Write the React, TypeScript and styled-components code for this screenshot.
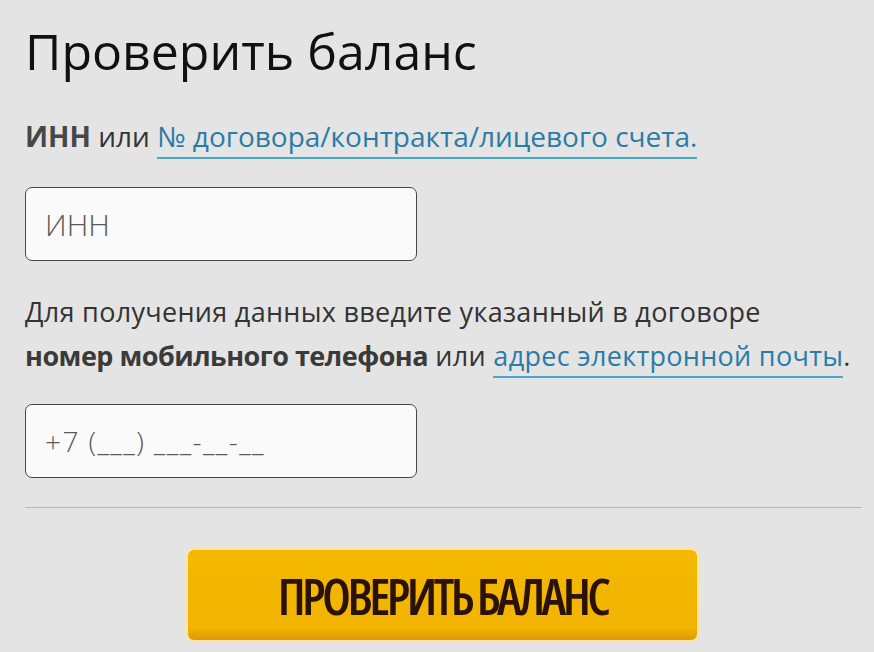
import styled, { createGlobalStyle } from "styled-components";

const GlobalStyle = createGlobalStyle`
  html, body {
    margin: 0;
    padding: 0;
    background: #e4e4e4;
  }
  body {
    font-family: "Open Sans", "Noto Sans", sans-serif;
  }
`;

export default function App() {
  return (
    <>
      <GlobalStyle />
      <Page>
        <Title>Проверить баланс</Title>
        <Lead>
          <b>ИНН</b> или <Link href="#">№ договора/контракта/лицевого счета.</Link>
        </Lead>
        <Field placeholder="ИНН" />
        <Hint>
          Для получения данных введите указанный в договоре
          <br />
          <b>номер мобильного телефона</b> или <Link href="#">адрес электронной почты</Link>.
        </Hint>
        <Field placeholder="+7 (___) ___-__-__" $phone />
        <Divider />
        <ButtonRow>
          <CheckButton type="button">ПРОВЕРИТЬ БАЛАНС</CheckButton>
        </ButtonRow>
      </Page>
    </>
  );
}

const Page = styled.main`
  width: 874px;
  height: 652px;
  box-sizing: border-box;
  padding: 16px 12px 0 25px;
  display: flex;
  flex-direction: column;
  align-items: flex-start;
  overflow: hidden;
`;

const Title = styled.h1`
  margin: 0;
  font-weight: 400;
  font-size: 50px;
  line-height: 70px;
  color: #111;
`;

const Lead = styled.p`
  margin: 30px 0 0;
  font-size: 28px;
  line-height: 40px;
  color: #333;

  b {
    font-weight: 700;
    color: #474747;
  }
`;

const Link = styled.a`
  color: #2a7ca6;
  text-decoration: none;
  border-bottom: 2.5px solid #47a7cd;
  padding-bottom: 2px;
`;

const Field = styled.input<{ $phone?: boolean }>`
  margin-top: ${(p) => (p.$phone ? "26px" : "31px")};
  width: 392px;
  height: 74px;
  box-sizing: border-box;
  padding: 0 19px;
  border: 1.5px solid #474747;
  border-radius: 7px;
  background: #fafafa;
  font-family: "Open Sans", sans-serif;
  font-weight: 300;
  font-size: ${(p) => (p.$phone ? "28px" : "30px")};
  letter-spacing: ${(p) => (p.$phone ? "1.4px" : "0")};
  color: #333;
  outline: none;

  &::placeholder {
    color: #595959;
  }
`;

const Hint = styled.p`
  margin: 29px 0 0;
  font-size: 27px;
  line-height: 44px;
  letter-spacing: 0.3px;
  color: #333;

  b {
    font-weight: 700;
    letter-spacing: -0.5px;
    color: #3a3a3a;
  }
`;

const Divider = styled.hr`
  align-self: stretch;
  margin: 29px 0 0;
  border: none;
  border-top: 1.5px solid #b8b8b8;
`;

const ButtonRow = styled.div`
  align-self: stretch;
  margin-top: 42px;
  display: flex;
  padding-left: 163px;
`;

const CheckButton = styled.button`
  width: 509px;
  height: 90px;
  border: none;
  border-radius: 6px;
  background: linear-gradient(#f4b800, #f2b400 86%, #df9808);
  box-shadow: 0 0 0 2px #fde7a0;
  font-family: "Open Sans", sans-serif;
  font-weight: 600;
  font-stretch: 75%;
  font-size: 51px;
  letter-spacing: -3.6px;
  color: #2a1306;
  cursor: pointer;
`;
